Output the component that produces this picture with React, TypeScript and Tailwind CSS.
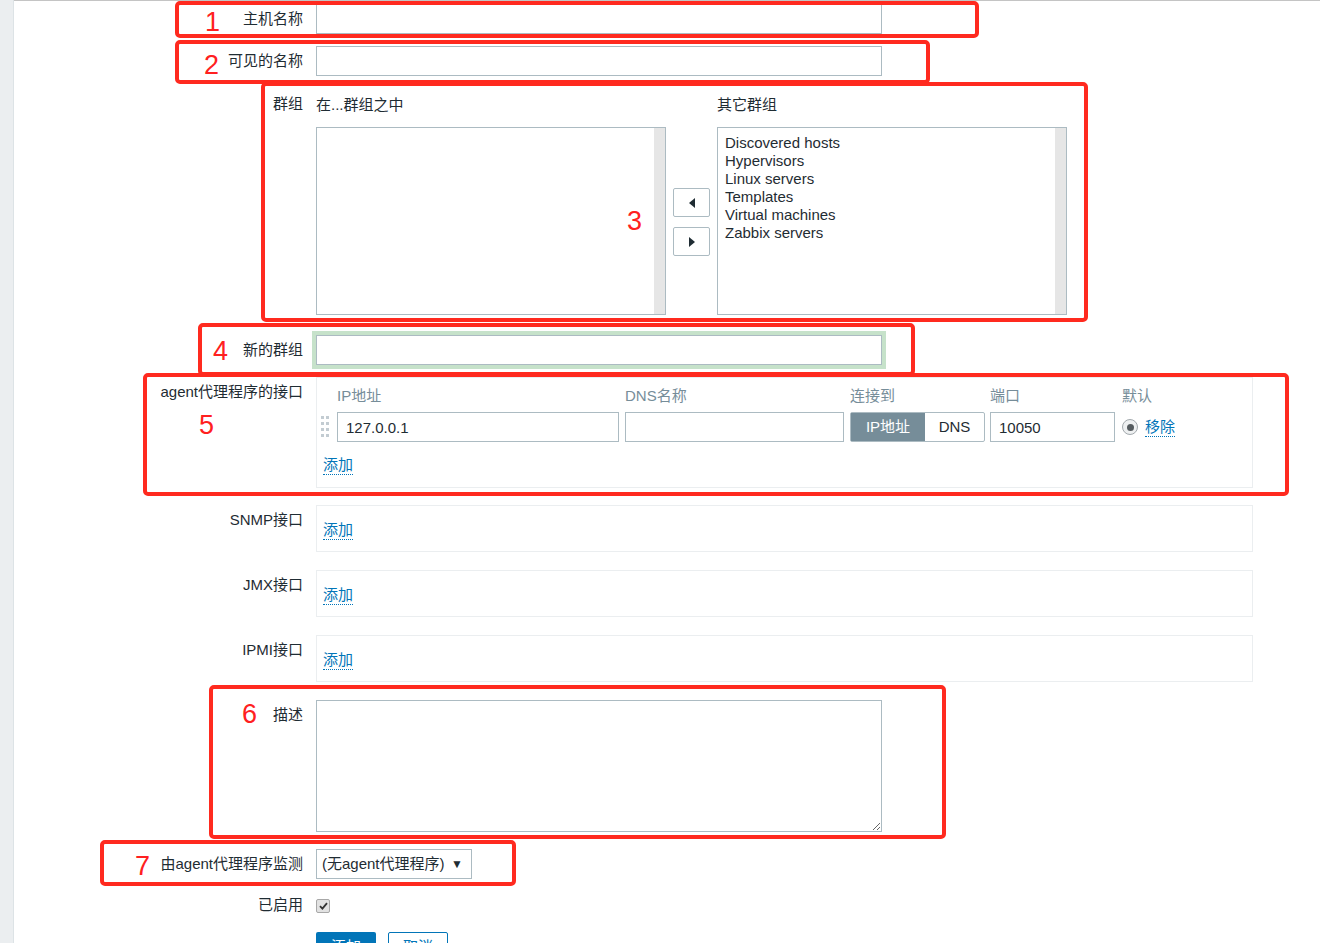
import React from 'react';

const inputCls =
  'h-[30px] border border-[#acbbc2] bg-white px-[8px] text-[15px] text-[#1f2c33] outline-none';

const groups = [
  'Discovered hosts',
  'Hypervisors',
  'Linux servers',
  'Templates',
  'Virtual machines',
  'Zabbix servers',
];

function Row({
  label,
  labelPad = 'pt-[6px]',
  className = '',
  children,
}: {
  label: string;
  labelPad?: string;
  className?: string;
  children: React.ReactNode;
}) {
  return (
    <div className={`flex ${className}`}>
      <div className={`w-[289px] shrink-0 text-right ${labelPad}`}>{label}</div>
      <div className="ml-[13px]">{children}</div>
    </div>
  );
}

function AddLink({ text = '添加' }: { text?: string }) {
  return (
    <span className="inline-block border-b border-dotted border-[#0275b8] leading-[18px] text-[#0275b8]">
      {text}
    </span>
  );
}

function ListBox({ items }: { items: string[] }) {
  return (
    <div className="flex h-[188px] w-[350px] border border-[#acbbc2] bg-white">
      <div className="flex-1 pl-[7px] pt-[6px]">
        {items.map((g) => (
          <div key={g} className="leading-[18px]">
            {g}
          </div>
        ))}
      </div>
      <div className="w-[11px] bg-[#e6e6e6]" />
    </div>
  );
}

function ArrowBtn({ dir }: { dir: 'left' | 'right' }) {
  return (
    <div className="flex h-[29px] w-[37px] items-center justify-center rounded-[2px] border border-[#acbbc2] bg-white">
      <svg width="8" height="10" viewBox="0 0 8 10">
        {dir === 'left' ? (
          <polygon points="7,0 7,10 1,5" fill="#1f2c33" />
        ) : (
          <polygon points="1,0 1,10 7,5" fill="#1f2c33" />
        )}
      </svg>
    </div>
  );
}

function DragHandle() {
  const dots = [];
  for (let r = 0; r < 4; r++) {
    for (let c = 0; c < 2; c++) {
      dots.push(<rect key={`${r}-${c}`} x={c * 5} y={r * 6} width="3" height="3" fill="#c3ccd2" />);
    }
  }
  return (
    <svg width="8" height="22" viewBox="0 0 8 22">
      {dots}
    </svg>
  );
}

function EmptyIface({ label, className }: { label: string; className: string }) {
  return (
    <Row label={label} className={className}>
      <div className="w-[937px] border border-[#ebeef0] pb-[11px] pl-[6px] pt-[15px]">
        <AddLink />
      </div>
    </Row>
  );
}

function RedBox({ className }: { className: string }) {
  return <div className={`pointer-events-none absolute rounded-[5px] border-4 border-[#ff2a1f] ${className}`} />;
}

function Num({ n, className }: { n: string; className: string }) {
  return (
    <div className={`pointer-events-none absolute text-[27px] leading-[27px] text-[#ff2020] ${className}`}>
      {n}
    </div>
  );
}

export default function App() {
  return (
    <div className="relative flex min-h-[990px] bg-white font-['Liberation_Sans','Noto_Sans_CJK_SC',sans-serif] text-[15px] leading-[18px] text-[#1f2c33]">
      <div className="w-[14px] shrink-0 border-r border-[#dde3e6] bg-[#ebeef0]" />
      <div className="flex-1 border-t border-[#c4c4c4] pt-[3px]">
        {/* host name */}
        <Row label="主机名称">
          <input className={`${inputCls} w-[566px]`} readOnly defaultValue="" />
        </Row>

        {/* visible name */}
        <Row label="可见的名称" className="mt-[12px]">
          <input className={`${inputCls} w-[566px]`} readOnly defaultValue="" />
        </Row>

        {/* groups */}
        <Row label="群组" labelPad="pt-[7px]" className="mt-[12px]">
          <div className="grid grid-cols-[350px_37px_350px] gap-x-[7px]">
            <div className="pt-[8px]">在...群组之中</div>
            <div />
            <div className="pt-[8px]">其它群组</div>
            <div className="mt-[13px]">
              <ListBox items={[]} />
            </div>
            <div className="mt-[13px] flex flex-col justify-center gap-[10px] pt-[2px]">
              <ArrowBtn dir="left" />
              <ArrowBtn dir="right" />
            </div>
            <div className="mt-[13px]">
              <ListBox items={groups} />
            </div>
          </div>
        </Row>

        {/* new group */}
        <Row label="新的群组" className="mt-[20px]">
          <input
            className={`${inputCls} w-[566px] shadow-[0_0_0_4px_#c6e2ca]`}
            readOnly
            defaultValue=""
          />
        </Row>

        {/* agent interfaces */}
        <Row label="agent代理程序的接口" className="mt-[12px]">
          <div className="w-[937px] border border-[#ebeef0] pb-[12px] pt-[9px]">
            <div className="flex text-[#768d99]">
              <div className="ml-[4px] w-[10px]" />
              <div className="ml-[6px] w-[282px]">IP地址</div>
              <div className="ml-[6px] w-[219px]">DNS名称</div>
              <div className="ml-[6px] w-[135px]">连接到</div>
              <div className="ml-[5px] w-[125px]">端口</div>
              <div className="ml-[7px]">默认</div>
            </div>
            <div className="mt-[7px] flex items-center">
              <div className="ml-[4px] flex w-[10px] items-center">
                <DragHandle />
              </div>
              <input className={`${inputCls} ml-[6px] w-[282px]`} readOnly defaultValue="127.0.0.1" />
              <input className={`${inputCls} ml-[6px] w-[219px]`} readOnly defaultValue="" />
              <div className="ml-[6px] flex h-[30px] w-[135px] rounded-[2px] border border-[#acbbc2]">
                <div className="flex w-[74px] items-center justify-center bg-[#768d99] text-white">IP地址</div>
                <div className="flex flex-1 items-center justify-center">DNS</div>
              </div>
              <input className={`${inputCls} ml-[5px] w-[125px]`} readOnly defaultValue="10050" />
              <div className="ml-[7px] flex items-center">
                <div className="flex h-[16px] w-[16px] items-center justify-center rounded-full border border-[#a3a9ad] bg-[#eef0f1]">
                  <div className="h-[7px] w-[7px] rounded-full bg-[#555b5f]" />
                </div>
                <div className="ml-[7px] mt-[1px]">
                  <AddLink text="移除" />
                </div>
              </div>
            </div>
            <div className="mt-[14px] pl-[6px]">
              <AddLink />
            </div>
          </div>
        </Row>

        <EmptyIface label="SNMP接口" className="mt-[17px]" />
        <EmptyIface label="JMX接口" className="mt-[18px]" />
        <EmptyIface label="IPMI接口" className="mt-[18px]" />

        {/* description */}
        <Row label="描述" className="mt-[18px]">
          <textarea
            className="block h-[132px] w-[566px] border border-[#acbbc2] bg-white outline-none"
            readOnly
            defaultValue=""
          />
        </Row>

        {/* monitored by proxy */}
        <Row label="由agent代理程序监测" className="mt-[17px]">
          <div className="flex h-[30px] w-[156px] items-center border border-[#acbbc2] bg-white pl-[5px] pr-[8px]">
            <span>(无agent代理程序)</span>
            <span className="ml-auto text-[12px]">▼</span>
          </div>
        </Row>

        {/* enabled */}
        <Row label="已启用" labelPad="pt-[2px]" className="mt-[15px]">
          <div className="mt-[5px] flex h-[14px] w-[14px] items-center justify-center rounded-[2px] border border-[#a8a8a8] bg-[#e2e2e2]">
            <svg width="9" height="8" viewBox="0 0 9 8">
              <path d="M1 4.2 L3.4 6.6 L8 1.2" fill="none" stroke="#333" strokeWidth="1.8" />
            </svg>
          </div>
        </Row>

        {/* buttons */}
        <Row label="" className="mt-[18px]">
          <div className="flex gap-[12px]">
            <div className="flex h-[30px] w-[60px] items-center justify-center rounded-[2px] bg-[#0275b8] text-white">
              添加
            </div>
            <div className="flex h-[30px] w-[60px] items-center justify-center rounded-[2px] border border-[#0275b8] bg-white text-[#0275b8]">
              取消
            </div>
          </div>
        </Row>
      </div>

      {/* annotation boxes */}
      <RedBox className="left-[175px] top-[1px] h-[37px] w-[804px]" />
      <RedBox className="left-[175px] top-[40px] h-[44px] w-[755px]" />
      <RedBox className="left-[261px] top-[82px] h-[240px] w-[827px]" />
      <RedBox className="left-[198px] top-[323px] h-[53px] w-[717px]" />
      <RedBox className="left-[143px] top-[373px] h-[123px] w-[1146px]" />
      <RedBox className="left-[209px] top-[685px] h-[154px] w-[737px]" />
      <RedBox className="left-[100px] top-[840px] h-[46px] w-[416px]" />

      <Num n="1" className="left-[205px] top-[9px]" />
      <Num n="2" className="left-[204px] top-[52px]" />
      <Num n="3" className="left-[627px] top-[208px]" />
      <Num n="4" className="left-[213px] top-[338px]" />
      <Num n="5" className="left-[199px] top-[412px]" />
      <Num n="6" className="left-[242px] top-[701px]" />
      <Num n="7" className="left-[135px] top-[853px]" />
    </div>
  );
}
